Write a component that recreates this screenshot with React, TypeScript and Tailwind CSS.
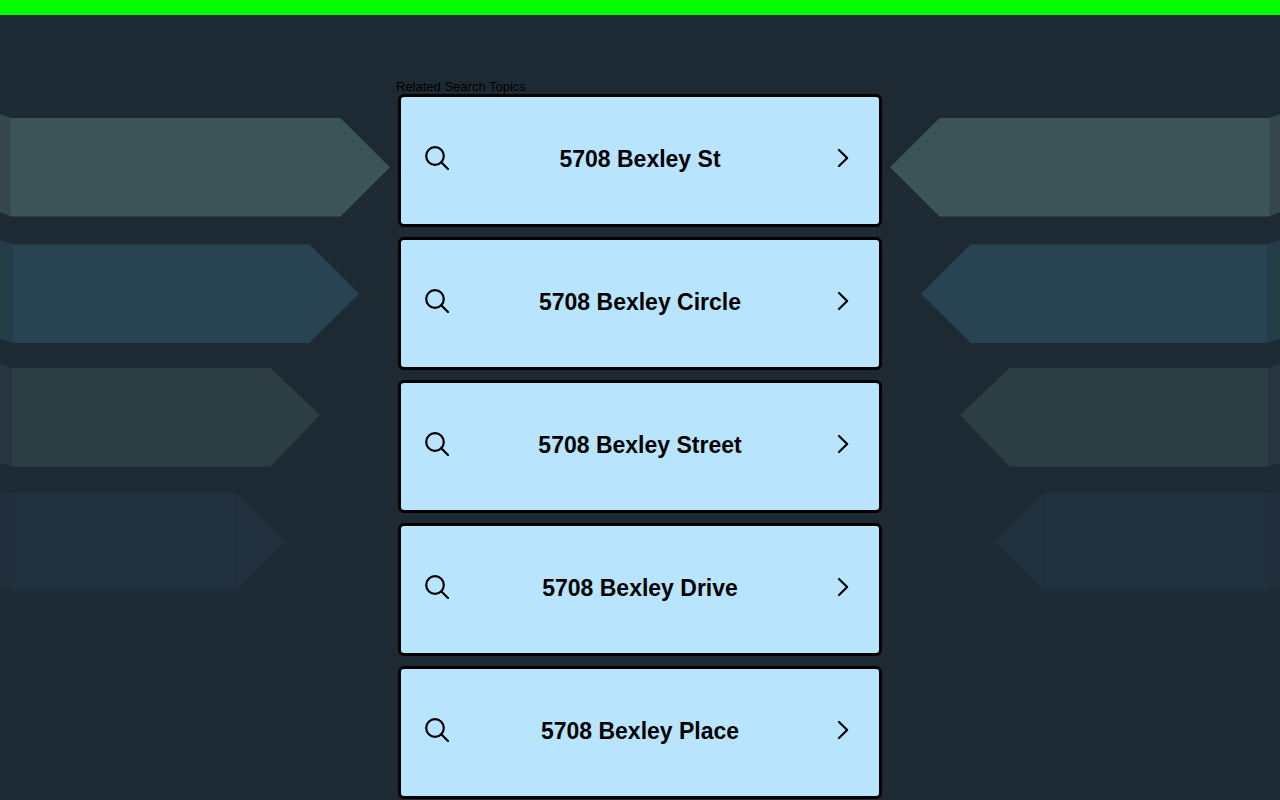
import React from 'react';

const topics = [
  "5708 Bexley St",
  "5708 Bexley Circle",
  "5708 Bexley Street",
  "5708 Bexley Drive",
  "5708 Bexley Place",
];

const SearchIcon: React.FC = () => (
  <svg className="size-6" viewBox="0 0 24 24" fill="none" stroke="black" strokeWidth="2.2" aria-hidden="true">
    <circle cx="10" cy="10" r="8.800" />
    <path d="M16.200 16.200 L23 23" strokeLinecap="round" />
  </svg>
);

const ChevronIcon: React.FC = () => (
  <svg
    className="size-6"
    viewBox="0 0 24 24"
    fill="none"
    stroke="black"
    strokeWidth="2.2"
    strokeLinecap="round"
    strokeLinejoin="round"
    aria-hidden="true"
  >
    <path d="M8 4 L16.200 12 L8 20" />
  </svg>
);

// folded ribbons that point at the list, drawn for the left edge
const Ribbons: React.FC<{ flip?: boolean }> = ({ flip }) => (
  <svg
    className={flip ? "w-[390px] h-[480px] shrink-0 -scale-x-100" : "w-[390px] h-[480px] shrink-0"}
    viewBox="0 0 390 480"
    aria-hidden="true"
  >
    <path d="M0 0 L11 4 V102.600 L0 98 Z" fill="#34474d" />
    <path d="M11 4 H340.500 L390 53.300 L340.500 102.600 H11 Z" fill="#3c5357" />
    <path d="M340.500 4 V102.600" stroke="#395054" />

    <path d="M0 126 L13 130.400 V229 L0 225 Z" fill="#253c49" />
    <path d="M13 130.400 H309.500 L359 179.700 L309.500 229 H13 Z" fill="#284452" />
    <path d="M309.500 130.400 V229" stroke="#27414f" />

    <path d="M0 250 L12 254 V352.600 L0 349 Z" fill="#28373f" />
    <path d="M12 254 H270.500 L320 301 L270.500 352.600 H12 Z" fill="#2c3e44" />

    <path d="M0 375 L12 379 V477 L0 473 Z" fill="#1f2e3a" />
    <path d="M12 379 H236 L285.500 428.500 L236 477 H12 Z" fill="#20303c" />
    <path d="M235.500 379 V477" stroke="#1f2f3a" />
  </svg>
);

const App: React.FC = () => {
  return (
    <div className="min-h-screen overflow-hidden bg-[#1e2a33] font-['Liberation_Sans',Arial,sans-serif] text-black">
      <div className="h-[15px] bg-[#00ff00]" />

      <div className="flex items-start">
        <div className="flex min-w-0 flex-1 justify-start overflow-hidden pt-[99px]">
          <Ribbons />
        </div>

        <main className="w-[488px] shrink-0 pt-16">
          <h1 className="text-[13px] leading-[15px]">Related Search Topics</h1>
          <ul className="flex flex-col gap-2.5 px-0.5">
            {topics.map((topic) => (
              <li key={topic}>
                <a
                  href="#"
                  className="flex h-[133px] items-center rounded-md border-3 border-black bg-[#b8e5fd] px-6 pb-1.5"
                >
                  <SearchIcon />
                  <span className="flex-1 pt-1 text-center text-[23px] font-bold">{topic}</span>
                  <ChevronIcon />
                </a>
              </li>
            ))}
          </ul>
        </main>

        <div className="flex min-w-0 flex-1 justify-end overflow-hidden pt-[99px]">
          <Ribbons flip />
        </div>
      </div>
    </div>
  );
};

export default App;
